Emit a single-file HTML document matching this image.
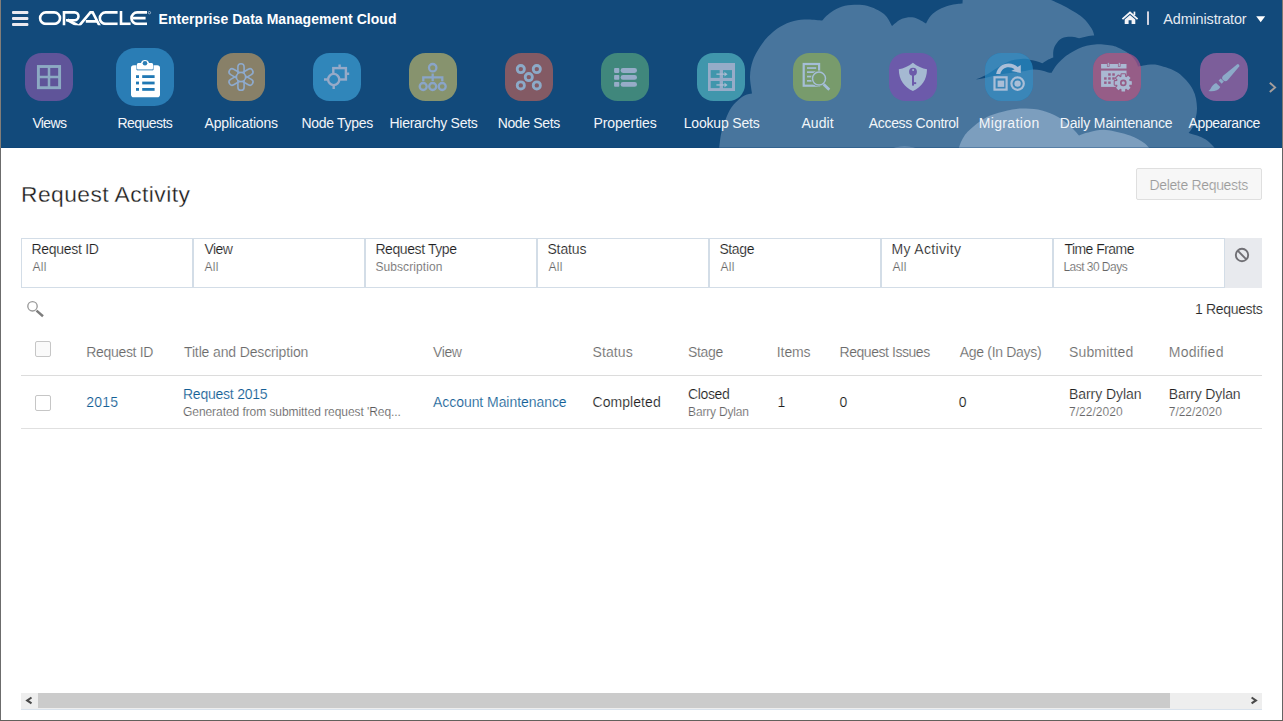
<!DOCTYPE html>
<html>
<head>
<meta charset="utf-8">
<title>Request Activity</title>
<style>
html,body{margin:0;padding:0;}
body{width:1283px;height:721px;overflow:hidden;background:#fff;position:relative;font-family:"Liberation Sans",sans-serif;color:#1a1a1a;}
.abs{position:absolute;}
.t{position:absolute;white-space:nowrap;line-height:1;}
#hdr{position:absolute;left:0;top:0;width:1283px;height:148px;background:#124a7b;overflow:hidden;}
.fc{position:absolute;top:238px;height:48px;width:170px;border:1px solid #d3dde7;background:#fff;}
.cb{position:absolute;width:14px;height:14px;border:1px solid #c6c6c6;border-radius:2px;background:linear-gradient(#f6f6f6,#ffffff);}
.hl{position:absolute;left:21px;width:1241px;height:1px;}
</style>
</head>
<body>
<div id="hdr">
<svg class="abs" style="left:0;top:0" width="1283" height="148" viewBox="0 0 1283 148">
<!-- clouds -->
<path d="M719.0,149.0 C719.5,145.8 720.2,136.5 722.0,130.0 C723.8,123.5 727.2,114.9 729.8,110.0 C732.4,105.1 735.0,103.2 737.5,100.7 C740.0,98.2 742.6,96.5 745.0,95.3 C747.4,94.1 750.8,93.8 752.0,93.5 C751.7,90.6 749.9,81.7 750.0,76.3 C750.1,70.9 751.2,65.6 752.7,61.0 C754.2,56.4 756.2,52.9 758.8,48.8 C761.3,44.7 764.4,40.3 768.0,36.6 C771.6,32.9 775.9,29.3 780.2,26.7 C784.5,24.1 789.3,22.2 793.9,21.0 C798.5,19.8 802.9,19.6 807.6,19.5 C812.3,19.4 819.7,20.4 822.1,20.6 C823.2,19.5 826.1,15.9 829.0,13.7 C831.9,11.5 835.9,9.0 839.6,7.6 C843.3,6.1 846.4,5.3 851.0,5.0 C855.6,4.7 861.5,4.3 867.0,5.8 C872.5,7.3 879.8,10.6 884.0,14.0 C888.2,17.4 890.7,24.0 892.0,26.0 C893.7,24.8 898.3,20.1 902.0,18.7 C905.7,17.3 910.0,16.7 914.0,17.5 C918.0,18.3 924.0,22.5 926.0,23.5 C926.8,22.2 928.8,17.8 931.0,15.5 C933.2,13.2 936.0,11.2 939.0,9.5 C942.0,7.8 946.0,6.5 949.0,5.6 C952.0,4.7 954.8,4.3 957.0,4.0 C959.2,3.7 961.6,3.7 962.5,3.6 C962.5,2.5 962.8,-1.9 962.8,-3.0 C969.0,-3.5 986.0,-6.2 1000.0,-6.0 C1014.0,-5.8 1038.8,-2.7 1046.5,-2.0 C1048.1,-1.3 1052.8,0.7 1056.0,2.2 C1059.2,3.7 1061.6,4.5 1066.0,7.0 C1070.4,9.5 1077.9,13.6 1082.2,17.2 C1086.5,20.8 1089.6,25.4 1091.6,28.5 C1093.6,31.6 1093.8,34.3 1094.2,35.5 C1092.9,35.6 1089.1,35.9 1086.6,36.4 C1084.1,36.9 1080.3,38.0 1079.0,38.3 C1078.2,38.1 1076.1,37.2 1074.0,37.0 C1071.9,36.8 1068.9,36.6 1066.6,37.0 C1064.3,37.4 1061.9,38.0 1060.0,39.5 C1058.1,41.0 1056.1,43.8 1055.0,45.8 C1053.9,47.8 1053.6,49.7 1053.3,51.6 C1053.0,53.5 1053.3,56.4 1053.3,57.4 C1052.5,57.8 1050.1,58.5 1048.3,59.5 C1046.5,60.5 1043.5,62.7 1042.5,63.3 C1041.5,62.9 1038.5,61.8 1036.6,61.2 C1034.6,60.7 1032.7,60.4 1030.8,60.0 C1028.9,59.6 1028.3,58.6 1025.0,58.7 C1021.7,58.8 1015.8,59.0 1011.2,60.5 C1006.6,62.0 1001.9,65.3 997.5,67.8 C993.1,70.3 988.6,73.7 985.0,75.6 C981.4,77.5 977.5,78.8 976.0,79.4 C977.5,79.2 981.4,78.6 985.0,77.9 C988.6,77.2 993.1,75.9 997.5,75.1 C1001.9,74.2 1006.6,73.5 1011.2,72.8 C1015.8,72.1 1021.3,71.5 1025.0,71.0 C1028.7,70.5 1030.7,69.6 1033.3,69.5 C1035.9,69.4 1038.3,69.8 1040.8,70.3 C1043.3,70.8 1046.5,72.0 1048.3,72.4 C1050.1,72.8 1051.0,72.7 1051.6,72.8 C1052.4,71.5 1054.6,67.4 1056.6,65.0 C1058.5,62.6 1061.1,60.2 1063.3,58.3 C1065.5,56.3 1067.5,54.9 1070.0,53.3 C1072.5,51.7 1075.4,50.0 1078.2,48.7 C1081.0,47.5 1083.8,46.5 1086.6,45.8 C1089.4,45.1 1092.1,44.7 1094.9,44.5 C1097.7,44.3 1100.4,44.3 1103.2,44.5 C1106.0,44.7 1109.2,45.1 1111.5,45.6 C1113.8,46.1 1115.1,46.4 1117.2,47.2 C1119.3,48.0 1122.1,49.5 1123.9,50.5 C1125.8,51.5 1126.7,52.1 1128.3,53.3 C1129.9,54.5 1131.9,56.2 1133.3,57.8 C1134.7,59.4 1135.8,61.2 1136.6,62.7 C1137.4,64.2 1137.8,65.9 1138.0,66.5 C1139.2,66.3 1142.8,65.5 1145.0,65.2 C1147.2,64.9 1148.9,64.5 1151.3,64.6 C1153.7,64.6 1155.0,64.1 1159.5,65.5 C1164.0,66.9 1172.5,68.8 1178.0,72.8 C1183.5,76.8 1189.6,83.5 1192.8,89.4 C1196.0,95.3 1196.8,102.1 1197.0,108.0 C1197.2,113.9 1195.2,120.6 1193.8,124.8 C1192.4,129.0 1189.5,131.6 1188.6,133.0 C1190.7,133.7 1197.6,135.5 1201.0,137.0 C1204.4,138.5 1206.6,140.0 1209.0,142.0 C1211.4,144.0 1214.5,147.8 1215.6,149.0 L1215.6,150.0 L719.0,150.0 Z" fill="#48759d"/>
<path d="M958.5,149.0 C959.1,147.5 960.2,143.1 962.0,140.0 C963.8,136.9 964.8,134.3 969.0,130.5 C973.2,126.7 980.2,120.4 987.0,117.0 C993.8,113.6 1003.5,111.4 1010.0,110.0 C1016.5,108.6 1020.7,108.5 1026.0,108.6 C1031.3,108.7 1036.7,109.1 1042.0,110.5 C1047.3,111.9 1053.3,114.4 1058.0,117.0 C1062.7,119.6 1066.5,122.9 1070.0,126.0 C1073.5,129.1 1077.5,133.9 1079.0,135.5 C1080.8,134.9 1085.5,132.9 1090.0,132.0 C1094.5,131.1 1099.3,129.4 1106.0,130.0 C1112.7,130.6 1123.8,133.4 1130.0,135.5 C1136.2,137.6 1140.1,140.3 1143.4,142.6 C1146.7,144.8 1148.9,147.9 1150.0,149.0 L1150.0,150.0 L958.5,150.0 Z" fill="#7c9ebe"/>
<ellipse cx="904.5" cy="149" rx="12" ry="2.6" fill="#7c9ebe"/>
<rect x="0" y="147" width="1283" height="1" fill="#0a3f72" opacity="0.32"/>
<!-- hamburger -->
<g fill="#ebe9ef"><rect x="12" y="11" width="16.4" height="3" rx="1"/><rect x="12" y="17" width="16.4" height="3" rx="1"/><rect x="12" y="23" width="16.4" height="3" rx="1"/></g>
<!-- ORACLE logo -->
<clipPath id="cl"><rect x="36" y="11.1" width="114" height="14.1"/></clipPath>
<g fill="none" stroke="#ffffff" stroke-width="2.6" clip-path="url(#cl)">
<rect x="40.1" y="12.4" width="19.9" height="11.5" rx="5.75"/>
<path d="M64,27V12.4H74.6a3.9,3.9 0 0 1 0,7.8H66"/>
<path d="M67.6,19.9L80.5,27" stroke-width="3.1"/>
<path d="M78.1,27L90.4,12.4H92.7L100.2,27"/>
<path d="M85.8,21.4H97"/>
<path d="M117.6,12.4H105.6a5.75,5.75 0 0 0 0,11.5H117.6"/>
<path d="M121,10V23.9H130.6"/>
<path d="M147,12.4H137.2a5.75,5.75 0 0 0 0,11.5H147"/>
<path d="M132.5,18.15H145.6"/>
</g>
<circle cx="149.4" cy="12.7" r="1.2" fill="none" stroke="#c9d6e4" stroke-width="0.7"/>
<!-- home -->
<g fill="#f4f4f8">
<path d="M1121.8,18.4L1130,11.3L1138.2,18.4L1137,19.8L1130,13.8L1123,19.8Z"/>
<path d="M1124.7,19.4L1130,14.9L1135.3,19.4V24.1H1131.6V20.3H1128.6V24.1H1124.7Z"/>
<rect x="1133.6" y="11.6" width="1.7" height="3.4"/>
</g>
<rect x="1147.1" y="11.4" width="1.8" height="13.5" fill="#e6e2ea"/>
<path d="M1256.2,16.2H1265.2L1260.7,22.3Z" fill="#ffffff"/>
<!-- right chevron -->
<path d="M1269.8,82.8L1275.1,87.4L1269.8,92" fill="none" stroke="#a59d9b" stroke-width="1.9"/>

<!-- tiles -->
<rect x="25" y="53" width="48" height="48" rx="16.5" fill="#5f5499"/>
<rect x="116" y="48" width="58" height="58" rx="19.5" fill="#2a7db5"/>
<rect x="217" y="53" width="48" height="48" rx="16.5" fill="#888068"/>
<rect x="313" y="53" width="48" height="48" rx="16.5" fill="#3086ba"/>
<rect x="409" y="53" width="48" height="48" rx="16.5" fill="#87936e"/>
<rect x="505" y="53" width="48" height="48" rx="16.5" fill="#835a64"/>
<rect x="601" y="53" width="48" height="48" rx="16.5" fill="#40877c"/>
<rect x="697" y="53" width="48" height="48" rx="16.5" fill="#4096ac"/>
<rect x="793" y="53" width="48" height="48" rx="16.5" fill="#789b6c"/>
<rect x="889" y="53" width="48" height="48" rx="16.5" fill="#6c5aaa"/>
<!-- migration: tile with sliver showing through -->
<clipPath id="cm"><rect x="985" y="53" width="48" height="48" rx="16.5"/></clipPath>
<rect x="985" y="53" width="48" height="48" rx="16.5" fill="#2278af"/>
<path d="M719.0,149.0 C719.5,145.8 720.2,136.5 722.0,130.0 C723.8,123.5 727.2,114.9 729.8,110.0 C732.4,105.1 735.0,103.2 737.5,100.7 C740.0,98.2 742.6,96.5 745.0,95.3 C747.4,94.1 750.8,93.8 752.0,93.5 C751.7,90.6 749.9,81.7 750.0,76.3 C750.1,70.9 751.2,65.6 752.7,61.0 C754.2,56.4 756.2,52.9 758.8,48.8 C761.3,44.7 764.4,40.3 768.0,36.6 C771.6,32.9 775.9,29.3 780.2,26.7 C784.5,24.1 789.3,22.2 793.9,21.0 C798.5,19.8 802.9,19.6 807.6,19.5 C812.3,19.4 819.7,20.4 822.1,20.6 C823.2,19.5 826.1,15.9 829.0,13.7 C831.9,11.5 835.9,9.0 839.6,7.6 C843.3,6.1 846.4,5.3 851.0,5.0 C855.6,4.7 861.5,4.3 867.0,5.8 C872.5,7.3 879.8,10.6 884.0,14.0 C888.2,17.4 890.7,24.0 892.0,26.0 C893.7,24.8 898.3,20.1 902.0,18.7 C905.7,17.3 910.0,16.7 914.0,17.5 C918.0,18.3 924.0,22.5 926.0,23.5 C926.8,22.2 928.8,17.8 931.0,15.5 C933.2,13.2 936.0,11.2 939.0,9.5 C942.0,7.8 946.0,6.5 949.0,5.6 C952.0,4.7 954.8,4.3 957.0,4.0 C959.2,3.7 961.6,3.7 962.5,3.6 C962.5,2.5 962.8,-1.9 962.8,-3.0 C969.0,-3.5 986.0,-6.2 1000.0,-6.0 C1014.0,-5.8 1038.8,-2.7 1046.5,-2.0 C1048.1,-1.3 1052.8,0.7 1056.0,2.2 C1059.2,3.7 1061.6,4.5 1066.0,7.0 C1070.4,9.5 1077.9,13.6 1082.2,17.2 C1086.5,20.8 1089.6,25.4 1091.6,28.5 C1093.6,31.6 1093.8,34.3 1094.2,35.5 C1092.9,35.6 1089.1,35.9 1086.6,36.4 C1084.1,36.9 1080.3,38.0 1079.0,38.3 C1078.2,38.1 1076.1,37.2 1074.0,37.0 C1071.9,36.8 1068.9,36.6 1066.6,37.0 C1064.3,37.4 1061.9,38.0 1060.0,39.5 C1058.1,41.0 1056.1,43.8 1055.0,45.8 C1053.9,47.8 1053.6,49.7 1053.3,51.6 C1053.0,53.5 1053.3,56.4 1053.3,57.4 C1052.5,57.8 1050.1,58.5 1048.3,59.5 C1046.5,60.5 1043.5,62.7 1042.5,63.3 C1041.5,62.9 1038.5,61.8 1036.6,61.2 C1034.6,60.7 1032.7,60.4 1030.8,60.0 C1028.9,59.6 1028.3,58.6 1025.0,58.7 C1021.7,58.8 1015.8,59.0 1011.2,60.5 C1006.6,62.0 1001.9,65.3 997.5,67.8 C993.1,70.3 988.6,73.7 985.0,75.6 C981.4,77.5 977.5,78.8 976.0,79.4 C977.5,79.2 981.4,78.6 985.0,77.9 C988.6,77.2 993.1,75.9 997.5,75.1 C1001.9,74.2 1006.6,73.5 1011.2,72.8 C1015.8,72.1 1021.3,71.5 1025.0,71.0 C1028.7,70.5 1030.7,69.6 1033.3,69.5 C1035.9,69.4 1038.3,69.8 1040.8,70.3 C1043.3,70.8 1046.5,72.0 1048.3,72.4 C1050.1,72.8 1051.0,72.7 1051.6,72.8 C1052.4,71.5 1054.6,67.4 1056.6,65.0 C1058.5,62.6 1061.1,60.2 1063.3,58.3 C1065.5,56.3 1067.5,54.9 1070.0,53.3 C1072.5,51.7 1075.4,50.0 1078.2,48.7 C1081.0,47.5 1083.8,46.5 1086.6,45.8 C1089.4,45.1 1092.1,44.7 1094.9,44.5 C1097.7,44.3 1100.4,44.3 1103.2,44.5 C1106.0,44.7 1109.2,45.1 1111.5,45.6 C1113.8,46.1 1115.1,46.4 1117.2,47.2 C1119.3,48.0 1122.1,49.5 1123.9,50.5 C1125.8,51.5 1126.7,52.1 1128.3,53.3 C1129.9,54.5 1131.9,56.2 1133.3,57.8 C1134.7,59.4 1135.8,61.2 1136.6,62.7 C1137.4,64.2 1137.8,65.9 1138.0,66.5 C1139.2,66.3 1142.8,65.5 1145.0,65.2 C1147.2,64.9 1148.9,64.5 1151.3,64.6 C1153.7,64.6 1155.0,64.1 1159.5,65.5 C1164.0,66.9 1172.5,68.8 1178.0,72.8 C1183.5,76.8 1189.6,83.5 1192.8,89.4 C1196.0,95.3 1196.8,102.1 1197.0,108.0 C1197.2,113.9 1195.2,120.6 1193.8,124.8 C1192.4,129.0 1189.5,131.6 1188.6,133.0 C1190.7,133.7 1197.6,135.5 1201.0,137.0 C1204.4,138.5 1206.6,140.0 1209.0,142.0 C1211.4,144.0 1214.5,147.8 1215.6,149.0 L1215.6,150.0 L719.0,150.0 Z" fill="#3a86b8" clip-path="url(#cm)"/>
<!-- daily maintenance: tile with cloud edge through it -->
<clipPath id="cd"><rect x="1093" y="53" width="48" height="48" rx="16.5"/></clipPath>
<rect x="1093" y="53" width="48" height="48" rx="16.5" fill="#7d5087"/>
<path d="M719.0,149.0 C719.5,145.8 720.2,136.5 722.0,130.0 C723.8,123.5 727.2,114.9 729.8,110.0 C732.4,105.1 735.0,103.2 737.5,100.7 C740.0,98.2 742.6,96.5 745.0,95.3 C747.4,94.1 750.8,93.8 752.0,93.5 C751.7,90.6 749.9,81.7 750.0,76.3 C750.1,70.9 751.2,65.6 752.7,61.0 C754.2,56.4 756.2,52.9 758.8,48.8 C761.3,44.7 764.4,40.3 768.0,36.6 C771.6,32.9 775.9,29.3 780.2,26.7 C784.5,24.1 789.3,22.2 793.9,21.0 C798.5,19.8 802.9,19.6 807.6,19.5 C812.3,19.4 819.7,20.4 822.1,20.6 C823.2,19.5 826.1,15.9 829.0,13.7 C831.9,11.5 835.9,9.0 839.6,7.6 C843.3,6.1 846.4,5.3 851.0,5.0 C855.6,4.7 861.5,4.3 867.0,5.8 C872.5,7.3 879.8,10.6 884.0,14.0 C888.2,17.4 890.7,24.0 892.0,26.0 C893.7,24.8 898.3,20.1 902.0,18.7 C905.7,17.3 910.0,16.7 914.0,17.5 C918.0,18.3 924.0,22.5 926.0,23.5 C926.8,22.2 928.8,17.8 931.0,15.5 C933.2,13.2 936.0,11.2 939.0,9.5 C942.0,7.8 946.0,6.5 949.0,5.6 C952.0,4.7 954.8,4.3 957.0,4.0 C959.2,3.7 961.6,3.7 962.5,3.6 C962.5,2.5 962.8,-1.9 962.8,-3.0 C969.0,-3.5 986.0,-6.2 1000.0,-6.0 C1014.0,-5.8 1038.8,-2.7 1046.5,-2.0 C1048.1,-1.3 1052.8,0.7 1056.0,2.2 C1059.2,3.7 1061.6,4.5 1066.0,7.0 C1070.4,9.5 1077.9,13.6 1082.2,17.2 C1086.5,20.8 1089.6,25.4 1091.6,28.5 C1093.6,31.6 1093.8,34.3 1094.2,35.5 C1092.9,35.6 1089.1,35.9 1086.6,36.4 C1084.1,36.9 1080.3,38.0 1079.0,38.3 C1078.2,38.1 1076.1,37.2 1074.0,37.0 C1071.9,36.8 1068.9,36.6 1066.6,37.0 C1064.3,37.4 1061.9,38.0 1060.0,39.5 C1058.1,41.0 1056.1,43.8 1055.0,45.8 C1053.9,47.8 1053.6,49.7 1053.3,51.6 C1053.0,53.5 1053.3,56.4 1053.3,57.4 C1052.5,57.8 1050.1,58.5 1048.3,59.5 C1046.5,60.5 1043.5,62.7 1042.5,63.3 C1041.5,62.9 1038.5,61.8 1036.6,61.2 C1034.6,60.7 1032.7,60.4 1030.8,60.0 C1028.9,59.6 1028.3,58.6 1025.0,58.7 C1021.7,58.8 1015.8,59.0 1011.2,60.5 C1006.6,62.0 1001.9,65.3 997.5,67.8 C993.1,70.3 988.6,73.7 985.0,75.6 C981.4,77.5 977.5,78.8 976.0,79.4 C977.5,79.2 981.4,78.6 985.0,77.9 C988.6,77.2 993.1,75.9 997.5,75.1 C1001.9,74.2 1006.6,73.5 1011.2,72.8 C1015.8,72.1 1021.3,71.5 1025.0,71.0 C1028.7,70.5 1030.7,69.6 1033.3,69.5 C1035.9,69.4 1038.3,69.8 1040.8,70.3 C1043.3,70.8 1046.5,72.0 1048.3,72.4 C1050.1,72.8 1051.0,72.7 1051.6,72.8 C1052.4,71.5 1054.6,67.4 1056.6,65.0 C1058.5,62.6 1061.1,60.2 1063.3,58.3 C1065.5,56.3 1067.5,54.9 1070.0,53.3 C1072.5,51.7 1075.4,50.0 1078.2,48.7 C1081.0,47.5 1083.8,46.5 1086.6,45.8 C1089.4,45.1 1092.1,44.7 1094.9,44.5 C1097.7,44.3 1100.4,44.3 1103.2,44.5 C1106.0,44.7 1109.2,45.1 1111.5,45.6 C1113.8,46.1 1115.1,46.4 1117.2,47.2 C1119.3,48.0 1122.1,49.5 1123.9,50.5 C1125.8,51.5 1126.7,52.1 1128.3,53.3 C1129.9,54.5 1131.9,56.2 1133.3,57.8 C1134.7,59.4 1135.8,61.2 1136.6,62.7 C1137.4,64.2 1137.8,65.9 1138.0,66.5 C1139.2,66.3 1142.8,65.5 1145.0,65.2 C1147.2,64.9 1148.9,64.5 1151.3,64.6 C1153.7,64.6 1155.0,64.1 1159.5,65.5 C1164.0,66.9 1172.5,68.8 1178.0,72.8 C1183.5,76.8 1189.6,83.5 1192.8,89.4 C1196.0,95.3 1196.8,102.1 1197.0,108.0 C1197.2,113.9 1195.2,120.6 1193.8,124.8 C1192.4,129.0 1189.5,131.6 1188.6,133.0 C1190.7,133.7 1197.6,135.5 1201.0,137.0 C1204.4,138.5 1206.6,140.0 1209.0,142.0 C1211.4,144.0 1214.5,147.8 1215.6,149.0 L1215.6,150.0 L719.0,150.0 Z" fill="#965d87" clip-path="url(#cd)"/>
<rect x="1200" y="53" width="48" height="48" rx="16.5" fill="#7c5e9a"/>

<!-- icon: views -->
<g fill="none" stroke="#8caac3"><rect x="38.4" y="66.5" width="21.2" height="21.2" stroke-width="2.9"/><path d="M49,66.5V87.7M38.4,77.1H59.6" stroke-width="2.5"/></g>
<!-- icon: requests -->
<g>
<rect x="131" y="65.2" width="29" height="32" rx="2.8" fill="#ffffff"/>
<path d="M136.9,69.9V64.6a1.6,1.6 0 0 1 1.6,-1.6H141a4.2,4.2 0 0 1 8,0H151.5a1.6,1.6 0 0 1 1.6,1.6V69.9Z" fill="#ffffff" stroke="#2a7db5" stroke-width="0.9"/>
<path d="M136.9,68.8V64.6a1.6,1.6 0 0 1 1.6,-1.6H141a4.2,4.2 0 0 1 8,0H151.5a1.6,1.6 0 0 1 1.6,1.6V68.8Z" fill="#ffffff"/>
<circle cx="145" cy="63.3" r="2.3" fill="#2a7db5"/>
<g fill="#2078b4"><rect x="136" y="75.2" width="3" height="2.8"/><rect x="142.2" y="75.2" width="12.4" height="2.8"/><rect x="136" y="81.6" width="3" height="2.8"/><rect x="142.2" y="81.6" width="12.4" height="2.8"/><rect x="136" y="88" width="3" height="2.8"/><rect x="142.2" y="88" width="12.4" height="2.8"/></g>
</g>
<!-- icon: applications -->
<g fill="none" stroke="#8eaacd" stroke-width="1.6">
<rect x="237.9" y="63.7" width="6.2" height="26.6" rx="3.1"/>
<rect x="237.9" y="63.7" width="6.2" height="26.6" rx="3.1" transform="rotate(60 241 77)"/>
<rect x="237.9" y="63.7" width="6.2" height="26.6" rx="3.1" transform="rotate(-60 241 77)"/>
<circle cx="241" cy="77" r="4.6" fill="#888068"/>
</g>
<!-- icon: node types -->
<g fill="none" stroke="#96aac8" stroke-width="2.4">
<rect x="333.3" y="68.1" width="12.6" height="11.4"/>
<path d="M339.6,64.5V68M347,73.8H349.2"/>
<circle cx="333.7" cy="79.5" r="5.6" fill="#3086ba"/>
<path d="M324,79.5H327.4M333.7,86V89"/>
</g>
<!-- icon: hierarchy sets -->
<g fill="none" stroke="#8aa5c8" stroke-width="2.3">
<circle cx="432.7" cy="67.7" r="3.7"/>
<path d="M432.7,73.5V81M423.3,81.2V77.4H442.3V81.2"/>
<circle cx="423.2" cy="86.5" r="3.5"/><circle cx="432.7" cy="86.5" r="3.5"/><circle cx="442.2" cy="86.5" r="3.5"/>
</g>
<!-- icon: node sets -->
<g fill="none" stroke="#8caac8" stroke-width="2.8">
<circle cx="520.8" cy="69.1" r="3.6"/><circle cx="536.8" cy="69.1" r="3.6"/><circle cx="528.8" cy="77.1" r="3.6"/><circle cx="520.8" cy="85.4" r="3.6"/><circle cx="536.8" cy="85.4" r="3.6"/>
</g>
<!-- icon: properties -->
<g fill="#96acc8">
<rect x="614.1" y="68.1" width="5.2" height="4.8" rx="0.8"/><rect x="620.6" y="68.1" width="16.4" height="4.8" rx="2.4"/>
<rect x="614.1" y="75" width="5.2" height="4.8" rx="0.8"/><rect x="620.6" y="75" width="16.4" height="4.8" rx="2.4"/>
<rect x="614.1" y="82" width="5.2" height="4.8" rx="0.8"/><rect x="620.6" y="82" width="16.4" height="4.8" rx="2.4"/>
</g>
<!-- icon: lookup sets -->
<g>
<rect x="708" y="63" width="27" height="28" fill="#96acc8"/>
<g fill="#4096ac"><rect x="710.7" y="70.1" width="9.1" height="7.8"/><rect x="723" y="70.1" width="9" height="7.8"/><rect x="710.7" y="81" width="9.1" height="7.1"/><rect x="723" y="81" width="9" height="7.1"/></g>
<rect x="719.8" y="69" width="3.2" height="20" fill="#96acc8"/><g fill="#a9bbd2"><rect x="716.4" y="73.5" width="9.6" height="1.3"/><path d="M724.2,71.7L727.6,74.15L724.2,76.6L724.9,74.15Z"/><rect x="716.4" y="84.3" width="9.6" height="1.3"/><path d="M724.2,82.5L727.6,84.95L724.2,87.4L724.9,84.95Z"/></g>
</g>
<!-- icon: audit -->
<g>
<rect x="803.7" y="64" width="15.4" height="21.7" fill="none" stroke="#a5bed7" stroke-width="2.2"/>
<g fill="#a5bed7"><rect x="807" y="67.2" width="9.2" height="1.7"/><rect x="807" y="71.3" width="9.2" height="1.7"/><rect x="807" y="75.7" width="6" height="1.7"/><rect x="807" y="80" width="5.4" height="1.7"/></g>
<circle cx="819" cy="78.6" r="8" fill="#789b6c"/>
<circle cx="819" cy="78.6" r="6.5" fill="none" stroke="#a5bed7" stroke-width="1.5"/>
<path d="M823.6,84.3L829.2,89.7" stroke="#789b6c" stroke-width="4.4" stroke-linecap="butt"/>
<path d="M823.6,84.3L829.3,89.8" stroke="#a5bed7" stroke-width="2.8"/>
</g>
<!-- icon: access control -->
<g>
<path d="M912.9,62.8C908.5,66.5 903.5,68.6 898.8,69.2C898.9,80 904.5,87.2 912.9,91C921.3,87.2 926.9,80 927,69.2C922.3,68.6 917.3,66.5 912.9,62.8Z" fill="#a5b9d2"/>
<circle cx="913" cy="71.7" r="3.9" fill="#6c5aaa"/>
<rect x="912" y="74" width="2" height="11.6" fill="#6c5aaa"/>
<rect x="913.5" y="82.2" width="2.7" height="1.9" fill="#6c5aaa"/>
<circle cx="913.1" cy="70" r="1" fill="#a5b9d2"/>
</g>
<!-- icon: migration -->
<g>
<rect x="994.5" y="77.3" width="12.1" height="12.3" fill="none" stroke="#aabed7" stroke-width="2.2"/>
<rect x="997.6" y="80.6" width="6.6" height="6.3" fill="#aabed7"/>
<circle cx="1017.6" cy="83.6" r="6.2" fill="none" stroke="#aabed7" stroke-width="2.2"/>
<circle cx="1017.6" cy="83.6" r="3.2" fill="#aabed7"/>
<path d="M996.1,73.9C997.5,67.5 1002.5,63.6 1008.6,63.6C1012.3,63.6 1015.3,64.9 1017.6,67L1020.8,64.9V72.9L1011.2,71L1014.6,69.3C1013,68 1011,67.3 1008.6,67.3C1004.5,67.3 1001.3,69.9 1000.3,73.9Z" fill="#aabed7"/>
</g>
<!-- icon: daily maintenance -->
<g>
<rect x="1101.1" y="64" width="25.4" height="4.5" fill="#aab9d2"/>
<rect x="1101.1" y="70.6" width="25.4" height="16.3" fill="#aab9d2"/>
<g fill="#aab9d2" stroke="#965d87" stroke-width="0.7"><rect x="1107.3" y="62.6" width="1.9" height="4"/><rect x="1118.3" y="62.6" width="1.9" height="4"/></g>
<g fill="#965d87">
<rect x="1108.2" y="73.3" width="2.5" height="2.4"/><rect x="1112.3" y="73.3" width="2.5" height="2.4"/>
<rect x="1104.1" y="77.3" width="2.5" height="2.4"/><rect x="1108.2" y="77.3" width="2.5" height="2.4"/><rect x="1112.3" y="77.3" width="2.5" height="2.4"/>
<rect x="1104.1" y="81.5" width="2.5" height="2.4"/><rect x="1108.2" y="81.5" width="2.5" height="2.4"/>
</g>
<g transform="translate(1123.3 82.9)">
<path d="M-1.92,-6.21 L-1.73,-8.53 L1.73,-8.53 L1.92,-6.21 L3.03,-5.75 L4.81,-7.25 L7.25,-4.81 L5.75,-3.03 L6.21,-1.92 L8.53,-1.73 L8.53,1.73 L6.21,1.92 L5.75,3.03 L7.25,4.81 L4.81,7.25 L3.03,5.75 L1.92,6.21 L1.73,8.53 L-1.73,8.53 L-1.92,6.21 L-3.03,5.75 L-4.81,7.25 L-7.25,4.81 L-5.75,3.03 L-6.21,1.92 L-8.53,1.73 L-8.53,-1.73 L-6.21,-1.92 L-5.75,-3.03 L-7.25,-4.81 L-4.81,-7.25 L-3.03,-5.75Z" fill="#965d87" stroke="#965d87" stroke-width="2.2" stroke-linejoin="round"/>
<path d="M-1.92,-6.21 L-1.73,-8.53 L1.73,-8.53 L1.92,-6.21 L3.03,-5.75 L4.81,-7.25 L7.25,-4.81 L5.75,-3.03 L6.21,-1.92 L8.53,-1.73 L8.53,1.73 L6.21,1.92 L5.75,3.03 L7.25,4.81 L4.81,7.25 L3.03,5.75 L1.92,6.21 L1.73,8.53 L-1.73,8.53 L-1.92,6.21 L-3.03,5.75 L-4.81,7.25 L-7.25,4.81 L-5.75,3.03 L-6.21,1.92 L-8.53,1.73 L-8.53,-1.73 L-6.21,-1.92 L-5.75,-3.03 L-7.25,-4.81 L-4.81,-7.25 L-3.03,-5.75Z" fill="#aab9d2"/>
<circle r="3.3" fill="#965d87"/>
<circle r="1.6" fill="#aab9d2"/>
</g>
</g>
<!-- icon: appearance -->
<g fill="#8caac8">
<path d="M1237.0,64.4A1.6,1.6 0 0 1 1239.2,66.6L1227.8,80.1A3.2,3.2 0 0 1 1223.1,75.7Z"/>
<path d="M1223.8,81.6L1220.7,78.5L1218.6,80.6L1221.7,83.7Z"/>
<path d="M1216.1,82.9C1213.5,83.8 1212,86 1211,88C1210.3,89.4 1209.5,90.3 1208.4,90.9C1213,92 1218.5,90.6 1220.3,86.9Z"/>
</g>
</svg>
</div>
<!-- Delete Requests button -->
<div class="abs" style="left:1136px;top:168px;width:124px;height:30px;border:1px solid #dfdfdf;border-radius:2px;background:#f7f7f7"></div>
<!-- filter bar -->
<div class="fc" style="left:21px"></div>
<div class="fc" style="left:193px"></div>
<div class="fc" style="left:365px"></div>
<div class="fc" style="left:537px"></div>
<div class="fc" style="left:709px"></div>
<div class="fc" style="left:881px"></div>
<div class="fc" style="left:1053px"></div>
<div class="abs" style="left:1225px;top:238px;width:37px;height:50px;background:#e8eaee"></div>
<svg class="abs" style="left:1232px;top:245px" width="20" height="20" viewBox="0 0 20 20"><circle cx="10" cy="10" r="6.2" fill="none" stroke="#707075" stroke-width="1.9"/><path d="M5.7,5.7L14.3,14.3" stroke="#707075" stroke-width="1.9"/></svg>
<!-- search icon -->
<svg class="abs" style="left:24px;top:298px" width="24" height="24" viewBox="0 0 24 24"><circle cx="8.5" cy="8.3" r="4.7" fill="none" stroke="#999999" stroke-width="1.35"/><path d="M12.5,12.6L19,18.2" stroke="#7d7d7d" stroke-width="2.5"/></svg>
<!-- table -->
<div class="cb" style="left:35px;top:341px;background:#fafafa"></div>
<div class="cb" style="left:35px;top:395px;background:#ffffff"></div>
<div class="hl" style="top:375px;background:#dcdcdc"></div>
<div class="hl" style="top:428px;background:#e0e0e0"></div>
<!-- scrollbar -->
<div class="abs" style="left:21px;top:693px;width:1241px;height:16px;background:#eeeeee"></div>
<div class="abs" style="left:38px;top:693px;width:1132px;height:15px;background:#cbcbcb"></div>
<div class="abs" style="left:21px;top:709px;width:1241px;height:1px;background:#d9e2ec"></div>
<svg class="abs" style="left:21px;top:693px" width="17" height="16" viewBox="0 0 17 16"><path d="M10.5,4.5L6.2,7.45L10.5,10.4" fill="none" stroke="#4a4a4a" stroke-width="2.1"/></svg>
<svg class="abs" style="left:1245px;top:693px" width="17" height="16" viewBox="0 0 17 16"><path d="M6.6,4.5L10.9,7.45L6.6,10.4" fill="none" stroke="#4a4a4a" stroke-width="2.1"/></svg>
<!-- window frame -->
<div class="abs" style="left:0;top:148px;width:1px;height:573px;background:#6c6c6c"></div>
<div class="abs" style="left:0;top:0;width:1px;height:148px;background:#827d78"></div>
<div class="abs" style="left:1282px;top:0;width:1px;height:148px;background:#7d7873"></div>
<div class="abs" style="left:1282px;top:148px;width:1px;height:573px;background:#646464"></div>
<div class="abs" style="left:0;top:720px;width:1283px;height:1px;background:#62615c"></div>
<div class="t" style="left:158.50px;top:12.00px;font-size:14px;color:#ffffff;font-weight:bold;letter-spacing:0.048px;">Enterprise Data Management Cloud</div>
<div class="t" style="left:1163.30px;top:12.00px;font-size:14.4px;color:#e4e9f1;letter-spacing:-0.117px;">Administrator</div>
<div class="t" style="left:32.40px;top:116.00px;font-size:14px;color:#f2f5f9;letter-spacing:-0.650px;">Views</div>
<div class="t" style="left:117.50px;top:116.00px;font-size:14px;color:#f2f5f9;letter-spacing:-0.557px;">Requests</div>
<div class="t" style="left:204.50px;top:116.00px;font-size:14px;color:#f2f5f9;letter-spacing:-0.173px;">Applications</div>
<div class="t" style="left:301.40px;top:116.00px;font-size:14px;color:#f2f5f9;letter-spacing:-0.289px;">Node Types</div>
<div class="t" style="left:389.50px;top:116.00px;font-size:14px;color:#f2f5f9;letter-spacing:-0.269px;">Hierarchy Sets</div>
<div class="t" style="left:497.70px;top:116.00px;font-size:14px;color:#f2f5f9;letter-spacing:-0.363px;">Node Sets</div>
<div class="t" style="left:593.40px;top:116.00px;font-size:14px;color:#f2f5f9;letter-spacing:-0.044px;">Properties</div>
<div class="t" style="left:683.70px;top:116.00px;font-size:14px;color:#f2f5f9;letter-spacing:-0.170px;">Lookup Sets</div>
<div class="t" style="left:801.40px;top:116.00px;font-size:14px;color:#f2f5f9;letter-spacing:0.100px;">Audit</div>
<div class="t" style="left:868.70px;top:116.00px;font-size:14px;color:#f2f5f9;letter-spacing:-0.300px;">Access Control</div>
<div class="t" style="left:978.70px;top:116.00px;font-size:14px;color:#f2f5f9;letter-spacing:0.362px;">Migration</div>
<div class="t" style="left:1059.70px;top:116.00px;font-size:14px;color:#f2f5f9;letter-spacing:-0.138px;">Daily Maintenance</div>
<div class="t" style="left:1188.60px;top:116.00px;font-size:14px;color:#f2f5f9;letter-spacing:-0.411px;">Appearance</div>
<div class="t" style="left:21.00px;top:183.00px;font-size:22.8px;color:#1c1c1c;letter-spacing:0.447px;-webkit-text-stroke:0.28px #ffffff;">Request Activity</div>
<div class="t" style="left:1149.40px;top:178.00px;font-size:14px;color:#9b9b9b;letter-spacing:-0.329px;-webkit-text-stroke:0.16px #ffffff;">Delete Requests</div>
<div class="t" style="left:31.40px;top:242.00px;font-size:14px;color:#1f1f1f;letter-spacing:-0.278px;-webkit-text-stroke:0.16px #ffffff;">Request ID</div>
<div class="t" style="left:32.40px;top:261.00px;font-size:12px;color:#666666;letter-spacing:0.300px;-webkit-text-stroke:0.16px #ffffff;">All</div>
<div class="t" style="left:204.40px;top:242.00px;font-size:14px;color:#1f1f1f;letter-spacing:-0.500px;-webkit-text-stroke:0.16px #ffffff;">View</div>
<div class="t" style="left:204.40px;top:261.00px;font-size:12px;color:#666666;letter-spacing:0.300px;-webkit-text-stroke:0.16px #ffffff;">All</div>
<div class="t" style="left:375.40px;top:242.00px;font-size:14px;color:#1f1f1f;letter-spacing:-0.409px;-webkit-text-stroke:0.16px #ffffff;">Request Type</div>
<div class="t" style="left:375.40px;top:261.00px;font-size:12px;color:#666666;letter-spacing:0.091px;-webkit-text-stroke:0.16px #ffffff;">Subscription</div>
<div class="t" style="left:547.40px;top:242.00px;font-size:14px;color:#1f1f1f;letter-spacing:-0.120px;-webkit-text-stroke:0.16px #ffffff;">Status</div>
<div class="t" style="left:548.40px;top:261.00px;font-size:12px;color:#666666;letter-spacing:0.300px;-webkit-text-stroke:0.16px #ffffff;">All</div>
<div class="t" style="left:719.40px;top:242.00px;font-size:14px;color:#1f1f1f;letter-spacing:-0.375px;-webkit-text-stroke:0.16px #ffffff;">Stage</div>
<div class="t" style="left:720.40px;top:261.00px;font-size:12px;color:#666666;letter-spacing:0.300px;-webkit-text-stroke:0.16px #ffffff;">All</div>
<div class="t" style="left:891.40px;top:242.00px;font-size:14px;color:#1f1f1f;letter-spacing:0.350px;-webkit-text-stroke:0.16px #ffffff;">My Activity</div>
<div class="t" style="left:892.40px;top:261.00px;font-size:12px;color:#666666;letter-spacing:0.300px;-webkit-text-stroke:0.16px #ffffff;">All</div>
<div class="t" style="left:1064.40px;top:242.00px;font-size:14px;color:#1f1f1f;letter-spacing:-0.533px;-webkit-text-stroke:0.16px #ffffff;">Time Frame</div>
<div class="t" style="left:1063.40px;top:261.00px;font-size:12px;color:#666666;letter-spacing:-0.527px;-webkit-text-stroke:0.16px #ffffff;">Last 30 Days</div>
<div class="t" style="left:1195.00px;top:302.00px;font-size:14px;color:#262626;letter-spacing:-0.333px;-webkit-text-stroke:0.16px #ffffff;">1 Requests</div>
<div class="t" style="left:86.30px;top:345.00px;font-size:14px;color:#6b6b6b;letter-spacing:-0.322px;-webkit-text-stroke:0.16px #ffffff;">Request ID</div>
<div class="t" style="left:184.00px;top:345.00px;font-size:14px;color:#6b6b6b;letter-spacing:-0.135px;-webkit-text-stroke:0.16px #ffffff;">Title and Description</div>
<div class="t" style="left:433.00px;top:345.00px;font-size:14px;color:#6b6b6b;letter-spacing:-0.400px;-webkit-text-stroke:0.16px #ffffff;">View</div>
<div class="t" style="left:592.50px;top:345.00px;font-size:14px;color:#6b6b6b;letter-spacing:0.100px;-webkit-text-stroke:0.16px #ffffff;">Status</div>
<div class="t" style="left:688.10px;top:345.00px;font-size:14px;color:#6b6b6b;letter-spacing:-0.350px;-webkit-text-stroke:0.16px #ffffff;">Stage</div>
<div class="t" style="left:776.80px;top:345.00px;font-size:14px;color:#6b6b6b;letter-spacing:-0.100px;-webkit-text-stroke:0.16px #ffffff;">Items</div>
<div class="t" style="left:839.50px;top:345.00px;font-size:14px;color:#6b6b6b;letter-spacing:-0.446px;-webkit-text-stroke:0.16px #ffffff;">Request Issues</div>
<div class="t" style="left:959.80px;top:345.00px;font-size:14px;color:#6b6b6b;letter-spacing:-0.317px;-webkit-text-stroke:0.16px #ffffff;">Age (In Days)</div>
<div class="t" style="left:1069.00px;top:345.00px;font-size:14px;color:#6b6b6b;letter-spacing:0.150px;-webkit-text-stroke:0.16px #ffffff;">Submitted</div>
<div class="t" style="left:1168.80px;top:345.00px;font-size:14px;color:#6b6b6b;letter-spacing:0.243px;-webkit-text-stroke:0.16px #ffffff;">Modified</div>
<div class="t" style="left:86.30px;top:395.00px;font-size:14px;color:#145f96;letter-spacing:0.233px;-webkit-text-stroke:0.16px #ffffff;">2015</div>
<div class="t" style="left:183.00px;top:387.00px;font-size:14px;color:#145f96;letter-spacing:-0.236px;-webkit-text-stroke:0.16px #ffffff;">Request 2015</div>
<div class="t" style="left:183.00px;top:406.00px;font-size:12px;color:#5c5c5c;letter-spacing:-0.064px;-webkit-text-stroke:0.16px #ffffff;">Generated from submitted request &#39;Req...</div>
<div class="t" style="left:433.00px;top:395.00px;font-size:14px;color:#145f96;letter-spacing:-0.056px;-webkit-text-stroke:0.16px #ffffff;">Account Maintenance</div>
<div class="t" style="left:592.50px;top:395.00px;font-size:14px;color:#1f1f1f;letter-spacing:0.062px;-webkit-text-stroke:0.16px #ffffff;">Completed</div>
<div class="t" style="left:688.10px;top:387.00px;font-size:14px;color:#1f1f1f;letter-spacing:-0.380px;-webkit-text-stroke:0.16px #ffffff;">Closed</div>
<div class="t" style="left:688.10px;top:406.00px;font-size:12px;color:#666666;letter-spacing:-0.180px;-webkit-text-stroke:0.16px #ffffff;">Barry Dylan</div>
<div class="t" style="left:777.60px;top:395.00px;font-size:14px;color:#1f1f1f;-webkit-text-stroke:0.16px #ffffff;">1</div>
<div class="t" style="left:839.50px;top:395.00px;font-size:14px;color:#1f1f1f;-webkit-text-stroke:0.16px #ffffff;">0</div>
<div class="t" style="left:958.80px;top:395.00px;font-size:14px;color:#1f1f1f;-webkit-text-stroke:0.16px #ffffff;">0</div>
<div class="t" style="left:1069.00px;top:387.00px;font-size:14px;color:#1f1f1f;letter-spacing:-0.070px;-webkit-text-stroke:0.16px #ffffff;">Barry Dylan</div>
<div class="t" style="left:1069.00px;top:406.00px;font-size:12px;color:#666666;letter-spacing:0.025px;-webkit-text-stroke:0.16px #ffffff;">7/22/2020</div>
<div class="t" style="left:1168.80px;top:387.00px;font-size:14px;color:#1f1f1f;letter-spacing:-0.130px;-webkit-text-stroke:0.16px #ffffff;">Barry Dylan</div>
<div class="t" style="left:1168.80px;top:406.00px;font-size:12px;color:#666666;letter-spacing:-0.037px;-webkit-text-stroke:0.16px #ffffff;">7/22/2020</div>
</body>
</html>
